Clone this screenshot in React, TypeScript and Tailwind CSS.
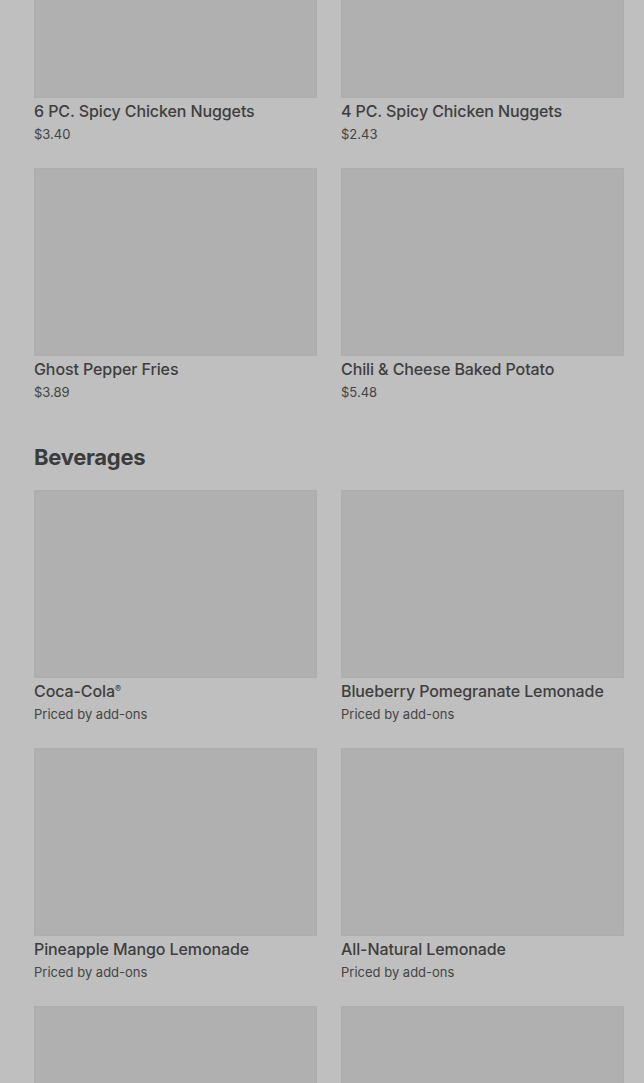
import React from "react";

type Item = { name: React.ReactNode; price: string };

const snacks: Item[] = [
  { name: "6 PC. Spicy Chicken Nuggets", price: "$3.40" },
  { name: "4 PC. Spicy Chicken Nuggets", price: "$2.43" },
  { name: "Ghost Pepper Fries", price: "$3.89" },
  { name: "Chili & Cheese Baked Potato", price: "$5.48" },
];

const beverages: Item[] = [
  {
    name: (
      <>
        Coca-Cola<span className="text-[9px] leading-[0] relative top-[-5px]">®</span>
      </>
    ),
    price: "Priced by add-ons",
  },
  { name: "Blueberry Pomegranate Lemonade", price: "Priced by add-ons" },
  { name: "Pineapple Mango Lemonade", price: "Priced by add-ons" },
  { name: "All-Natural Lemonade", price: "Priced by add-ons" },
  { name: "", price: "" },
  { name: "", price: "" },
];

function Card({ item }: { item: Item }) {
  return (
    <div className="flex flex-col">
      <div className="h-[188px] bg-[#b0b0b0] border border-[#adadad]" />
      {item.name && (
        <>
          <div className="mt-[3px] h-[20px] text-[16px] leading-[20px] font-medium text-[#3e3e3e] whitespace-nowrap tracking-[-0.1px]">
            {item.name}
          </div>
          <div className="mt-[4px] text-[13px] leading-[18px] text-[#444444]">
            {item.price}
          </div>
        </>
      )}
    </div>
  );
}

export default function App() {
  return (
    <div
      className="min-h-[1083px] h-[1083px] overflow-hidden bg-[#bfbfbf] pl-[34px] pr-[20px]"
      style={{ fontFamily: "Inter, 'Noto Sans', sans-serif" }}
    >
      <div className="-mt-[90px] grid grid-cols-2 gap-x-[24px] gap-y-[25px]">
        {snacks.map((it, i) => (
          <Card key={i} item={it} />
        ))}
      </div>
      <h2 className="mt-[42px] text-[22px] leading-[28px] font-bold text-[#3b3b3b] tracking-[-0.3px]">
        Beverages
      </h2>
      <div className="mt-[19px] grid grid-cols-2 gap-x-[24px] gap-y-[25px]">
        {beverages.map((it, i) => (
          <Card key={i} item={it} />
        ))}
      </div>
    </div>
  );
}
